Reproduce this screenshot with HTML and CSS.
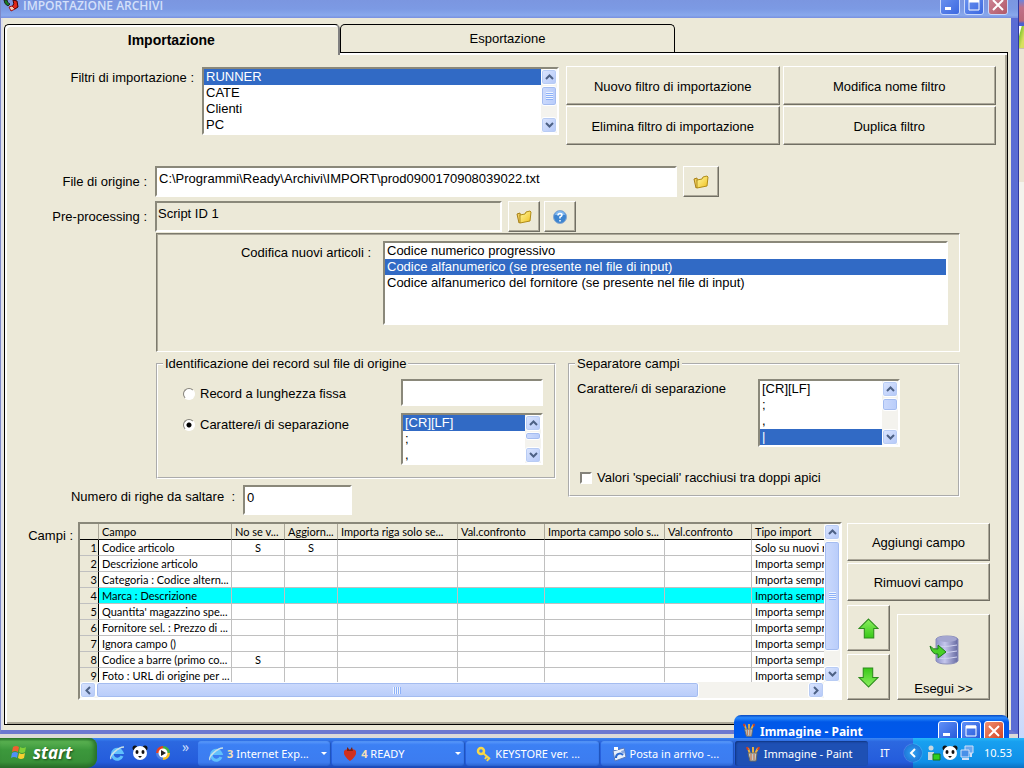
FILE: index.html
```
<!DOCTYPE html>
<html lang="it">
<head>
<meta charset="utf-8">
<meta name="viewport" content="width=device-width, initial-scale=1">
<title>Importazione archivi</title>
<link rel="stylesheet" href="styles.css">
</head>
<body>

<!-- simboli usati piu' volte -->
<svg class="defs" width="0" height="0" aria-hidden="true">
	<linearGradient id="g_yellow" x1="0" y1="0" x2="1" y2="1">
		<stop offset="0" stop-color="#fff9a0"/><stop offset="1" stop-color="#f0c020"/>
	</linearGradient>
	<linearGradient id="g_green" x1="0" y1="0" x2="0" y2="1">
		<stop offset="0" stop-color="#8cf060"/><stop offset="1" stop-color="#38c818"/>
	</linearGradient>
	<linearGradient id="g_db" x1="0" y1="0" x2="1" y2="0">
		<stop offset="0" stop-color="#8c90c8"/><stop offset=".4" stop-color="#c4c6ec"/><stop offset="1" stop-color="#6468a0"/>
	</linearGradient>
	<symbol id="folder" viewBox="0 0 16 16">
		<path d="M1 5l3-1 1 9-2 1z" fill="#f0d060" stroke="#a88018"/>
		<path d="M4 6l5-1 1-2 4-1 1 1-1 9-10 2z" fill="url(#g_yellow)" stroke="#b08c18"/>
	</symbol>
	<symbol id="up" viewBox="0 0 9 6"><path d="M1 5l3.500-3.500L8 5" fill="none" stroke="#4d6185" stroke-width="2"/></symbol>
	<symbol id="down" viewBox="0 0 9 6"><path d="M1 1l3.500 3.500L8 1" fill="none" stroke="#4d6185" stroke-width="2"/></symbol>
	<symbol id="arrow" viewBox="0 0 20 20"><path d="M10 1l9 9h-4v9H6v-9H1z" fill="url(#g_green)" stroke="#2c8c1c"/></symbol>
	<symbol id="panda" viewBox="0 0 16 16">
		<circle cx="3" cy="3" r="2.500" fill="#111"/><circle cx="13" cy="3" r="2.500" fill="#111"/>
		<circle cx="8" cy="8" r="7" fill="#fff"/>
		<ellipse cx="5" cy="7" rx="1.500" ry="2" fill="#111"/><ellipse cx="11" cy="7" rx="1.500" ry="2" fill="#111"/>
		<path d="M6 11h4l-2 2z" fill="#111"/>
	</symbol>
	<symbol id="ie" viewBox="0 0 16 16">
		<path d="M13 11A5 5 0 1 1 13 7.500H5" fill="none" stroke="#60c0fc" stroke-width="3"/>
		<path d="M2 14C0 11 9 2 15 2" fill="none" stroke="#c8e0e8" stroke-width="1.400"/>
	</symbol>
	<symbol id="paint" viewBox="0 0 16 16">
		<path d="M5 8L3 2M8 8V1M10 8l3-6" stroke="#e8b040" stroke-width="2"/>
		<path d="M3 4L2 1M13 4l1-3" stroke="#d04020" stroke-width="2"/>
		<path d="M3 7h9l-1 8H5z" fill="#c0c8c8" stroke="#706858"/><path d="M6 8v6M9 8v6" stroke="#c06030"/>
	</symbol>
</svg>

<div class="desktop">
	<div class="window">
		<div class="titlebar">
			<svg class="app_icon" width="16" height="12" viewBox="0 0 16 12"><path d="M1 0q0 4 4 6l2-2Q4 3 4 0z" fill="#188020" stroke="#222"/><path d="M10 0l4 1 1 6-3 2-3-2q3-3 1-7z" fill="#e02818" stroke="#400"/><path d="M6 7l3-1 3 3-4 2z" fill="#f8c8b0" stroke="#a01010"/></svg>
			<span class="caption">IMPORTAZIONE ARCHIVI</span>
			<button class="win_btn" aria-label="Riduci"><svg width="12" height="12"><path d="M1 8h6v3H1z" fill="#fff"/></svg></button>
			<button class="win_btn" aria-label="Ingrandisci"><svg width="12" height="12"><path d="M1 1h10v10H1z" fill="none" stroke="#fff"/><path d="M1 2h10" stroke="#fff" stroke-width="3"/></svg></button>
			<button class="win_btn close" aria-label="Chiudi"><svg width="12" height="12"><path d="M1 1l10 10M11 1L1 11" stroke="#fff" stroke-width="2"/></svg></button>
		</div>

		<div class="tabs">
			<button class="tab active">Importazione</button>
			<button class="tab">Esportazione</button>
		</div>

		<div class="panel">

			<div class="filters">
				<label for="filtri">Filtri di importazione :</label>
				<div class="listbox">
					<select id="filtri" size="4">
						<option selected>RUNNER</option>
						<option>CATE</option>
						<option>Clienti</option>
						<option>PC</option>
					</select>
					<div class="vscroll">
						<button aria-label="Su"><svg width="9" height="6"><use href="#up"/></svg></button>
						<div class="thumb thumb_m grip"></div>
						<button aria-label="Giu"><svg width="9" height="6"><use href="#down"/></svg></button>
					</div>
				</div>
				<div class="filter_btns">
					<button class="btn">Nuovo filtro di importazione</button>
					<button class="btn">Modifica nome filtro</button>
					<button class="btn">Elimina filtro di importazione</button>
					<button class="btn">Duplica filtro</button>
				</div>
			</div>

			<div class="row row_file">
				<label for="origine">File di origine :</label>
				<input type="text" id="origine" class="field field_file" value="C:\Programmi\Ready\Archivi\IMPORT\prod0900170908039022.txt">
				<button class="btn wide" aria-label="Sfoglia"><svg width="16" height="16"><use href="#folder"/></svg></button>
			</div>

			<div class="row row_script">
				<label for="script">Pre-processing :</label>
				<input type="text" id="script" class="field field_script" value="Script ID 1" readonly>
				<button class="btn small" aria-label="Apri script"><svg width="16" height="16"><use href="#folder"/></svg></button>
				<button class="btn small" aria-label="Aiuto"><svg width="16" height="16" viewBox="0 0 16 16"><circle cx="8" cy="8" r="6.500" fill="#3c84d0" stroke="#88a8d0"/><path d="M3 6a5 4 0 0 1 10 0z" fill="#80b8f0"/><path d="M6 6.500q0-2 2-2t2 1.500q0 1-2 2v1.500M8 11v1.500" fill="none" stroke="#fff" stroke-width="1.500"/></svg></button>
			</div>

			<div class="sunken">
				<label for="codifica">Codifica nuovi articoli :</label>
				<div class="listbox tall">
					<select id="codifica" size="5">
						<option>Codice numerico progressivo</option>
						<option selected>Codice alfanumerico (se presente nel file di input)</option>
						<option>Codice alfanumerico del fornitore (se presente nel file di input)</option>
					</select>
				</div>
			</div>

			<div class="groups">
				<div class="group_left">
					<fieldset class="record">
						<legend>Identificazione dei record sul file di origine</legend>
						<label><input type="radio" name="tipo"> Record a lunghezza fissa</label>
						<input type="text" class="field" aria-label="Lunghezza record">
						<label><input type="radio" name="tipo" checked> Carattere/i di separazione</label>
						<div class="listbox short">
							<select size="3" aria-label="Separatore record">
								<option selected>[CR][LF]</option>
								<option>;</option>
								<option>,</option>
							</select>
							<div class="vscroll">
								<button aria-label="Su"><svg width="9" height="6"><use href="#up"/></svg></button>
								<div class="thumb thumb_xs"></div>
								<button aria-label="Giu"><svg width="9" height="6"><use href="#down"/></svg></button>
							</div>
						</div>
					</fieldset>
					<div class="skip">
						<label for="righe">Numero di righe da saltare &nbsp;:</label>
						<input type="text" id="righe" class="field" value="0">
					</div>
				</div>
				<fieldset class="separator">
					<legend>Separatore campi</legend>
					<label for="sep">Carattere/i di separazione</label>
					<div class="listbox">
						<select id="sep" size="4">
							<option>[CR][LF]</option>
							<option>;</option>
							<option>,</option>
							<option selected>|</option>
						</select>
						<div class="vscroll">
							<button aria-label="Su"><svg width="9" height="6"><use href="#up"/></svg></button>
							<div class="thumb thumb_s"></div>
							<button aria-label="Giu"><svg width="9" height="6"><use href="#down"/></svg></button>
						</div>
					</div>
					<label class="quotes"><input type="checkbox"> Valori 'speciali' racchiusi tra doppi apici</label>
				</fieldset>
			</div>

			<div class="fields">
				<div class="fields_label">Campi :</div>
				<div class="grid">
					<div class="grid_view">
						<table>
							<colgroup>
								<col class="c_num"><col class="c_campo"><col class="c_flag"><col class="c_flag"><col class="c_solo"><col class="c_val"><col class="c_solo"><col class="c_val"><col>
							</colgroup>
							<thead>
								<tr><th></th><th>Campo</th><th>No se v...</th><th>Aggiorn...</th><th>Importa riga solo se...</th><th>Val.confronto</th><th>Importa campo solo s...</th><th>Val.confronto</th><th>Tipo import</th></tr>
							</thead>
							<tbody>
								<tr><th>1</th><td>Codice articolo</td><td>S</td><td>S</td><td></td><td></td><td></td><td></td><td>Solo su nuovi r</td></tr>
								<tr><th>2</th><td>Descrizione articolo</td><td></td><td></td><td></td><td></td><td></td><td></td><td>Importa sempre</td></tr>
								<tr><th>3</th><td>Categoria : Codice altern...</td><td></td><td></td><td></td><td></td><td></td><td></td><td>Importa sempre</td></tr>
								<tr class="current"><th>4</th><td>Marca : Descrizione</td><td></td><td></td><td></td><td></td><td></td><td></td><td>Importa sempre</td></tr>
								<tr><th>5</th><td>Quantita' magazzino spe...</td><td></td><td></td><td></td><td></td><td></td><td></td><td>Importa sempre</td></tr>
								<tr><th>6</th><td>Fornitore sel. : Prezzo di ...</td><td></td><td></td><td></td><td></td><td></td><td></td><td>Importa sempre</td></tr>
								<tr><th>7</th><td>Ignora campo ()</td><td></td><td></td><td></td><td></td><td></td><td></td><td>Importa sempre</td></tr>
								<tr><th>8</th><td>Codice a barre (primo co...</td><td>S</td><td></td><td></td><td></td><td></td><td></td><td>Importa sempre</td></tr>
								<tr><th>9</th><td>Foto : URL di origine per ...</td><td></td><td></td><td></td><td></td><td></td><td></td><td>Importa sempre</td></tr>
							</tbody>
						</table>
					</div>
					<div class="vscroll">
						<button aria-label="Su"><svg width="9" height="6"><use href="#up"/></svg></button>
						<div class="thumb thumb_l grip"></div>
						<button aria-label="Giu"><svg width="9" height="6"><use href="#down"/></svg></button>
					</div>
					<div class="hscroll">
						<button aria-label="Sinistra"><svg width="6" height="9" viewBox="0 0 6 9"><path d="M5 1L1.500 4.500 5 8" fill="none" stroke="#4d6185" stroke-width="2"/></svg></button>
						<div class="hthumb"></div>
						<button aria-label="Destra"><svg width="6" height="9" viewBox="0 0 6 9"><path d="M1 1l3.500 3.500L1 8" fill="none" stroke="#4d6185" stroke-width="2"/></svg></button>
					</div>
				</div>
				<div class="actions">
					<button class="btn">Aggiungi campo</button>
					<button class="btn">Rimuovi campo</button>
					<div class="actions_bottom">
						<div class="move">
							<button class="btn" aria-label="Sposta su"><svg width="21" height="21"><use href="#arrow"/></svg></button>
							<button class="btn" aria-label="Sposta giu"><svg class="flip" width="21" height="21"><use href="#arrow"/></svg></button>
						</div>
						<button class="btn run">
							<svg width="30" height="30" viewBox="0 0 30 30"><path d="M7 4v22q2 3 11 3t11-3V4q-2-3-11-3T7 4z" fill="url(#g_db)" stroke="#8c90bc"/><ellipse cx="18" cy="4" rx="10" ry="3" fill="#a4a6d0"/><path d="M8 10q3 3 20 0M8 16q3 3 20 0M8 22q3 3 20 0" fill="none" stroke="#d0d2f0"/><path d="M1 11q3 4 8 3v-4l8 7-8 6v-4q-6 1-8-8z" fill="#48d028" stroke="#1c7c18"/></svg>
							<span>Esegui &gt;&gt;</span>
						</button>
					</div>
				</div>
			</div>

		</div>
	</div>

	<div class="behind">
		<div class="behind_title"></div>
		<div class="behind_logo"></div>
		<div class="behind_bar"></div>
		<div class="behind_page"></div>
	</div>

	<!-- finestra di Paint sopra la finestra principale -->
	<div class="paint_win">
		<svg width="14" height="16"><use href="#paint"/></svg>
		<span>Immagine - Paint</span>
		<button class="win_btn" aria-label="Riduci Paint"><svg width="12" height="12"><path d="M1 8h7v3H1z" fill="#fff"/></svg></button>
		<button class="win_btn" aria-label="Ingrandisci Paint"><svg width="12" height="12"><path d="M1 1h10v10H1z" fill="none" stroke="#fff"/><path d="M1 2h10" stroke="#fff" stroke-width="3"/></svg></button>
		<button class="win_btn close" aria-label="Chiudi Paint"><svg width="12" height="12"><path d="M1 1l10 10M11 1L1 11" stroke="#fff" stroke-width="2"/></svg></button>
	</div>
</div>

<div class="taskbar">
	<button class="start">
		<svg width="18" height="18" viewBox="0 0 18 18"><path d="M3 3q3-2 6 0L8 8Q5 6 2 8z" fill="#f06030"/><path d="M10 3q3 2 6 0l-1 5q-3 2-6 0z" fill="#80d038"/><path d="M2 9q3-2 6 0l-1 5q-3-2-6 0z" fill="#5090f8"/><path d="M9 9q3 2 6 0l-1 5q-3 2-6 0z" fill="#f8d030"/></svg>
		start
	</button>
	<div class="quick">
		<svg width="16" height="16"><use href="#ie"/></svg>
		<svg width="16" height="16"><use href="#panda"/></svg>
		<svg width="16" height="16" viewBox="0 0 16 16"><path d="M8 8V1a7 7 0 0 1 7 7z" fill="#40b040"/><path d="M8 8h7a7 7 0 0 1-7 7z" fill="#f8c020"/><path d="M8 8v7a7 7 0 0 1-7-7z" fill="#5080e0"/><path d="M8 8H1a7 7 0 0 1 7-7z" fill="#e84020"/><circle cx="8" cy="8" r="4.500" fill="#fff"/><path d="M6 5l5 3-5 3z" fill="#222"/></svg>
		<span class="more">»</span>
	</div>
	<div class="tasks">
		<button class="task"><svg width="16" height="16"><use href="#ie"/></svg><span><b>3</b> Internet Exp...</span><i></i></button>
		<button class="task"><svg width="16" height="16" viewBox="0 0 16 16"><path d="M8 15Q1 10 2 5q2-3 6-1 4-2 6 1 1 5-6 10z" fill="#d03020"/><path d="M5 1l3 3 2-3 1 4H5z" fill="#802010"/></svg><span><b>4</b> READY</span><i></i></button>
		<button class="task"><svg width="16" height="16" viewBox="0 0 16 16"><circle cx="5" cy="5" r="3" fill="none" stroke="#f8d848" stroke-width="2.500"/><path d="M7 7l7 6M11 10l-2 3M13 12l-2 3" stroke="#f8d848" stroke-width="2"/></svg><span>KEYSTORE ver. ...</span></button>
		<button class="task"><svg width="16" height="16" viewBox="0 0 16 16"><path d="M2 5l11-3 2 9-11 4z" fill="#e8f0fc" stroke="#5878b8"/><path d="M5 12a4 4 0 0 1 7-3" fill="none" stroke="#2868d0" stroke-width="2"/><path d="M10 5l3-1 1 3-3 1z" fill="#88a8e0"/><path d="M3 1h4v3H3z" fill="#fff"/></svg><span>Posta in arrivo -...</span></button>
		<button class="task pressed"><svg width="16" height="16"><use href="#paint"/></svg><span>Immagine - Paint</span></button>
	</div>
	<div class="lang">IT</div>
	<div class="tray">
		<button class="chevron" aria-label="Mostra icone nascoste"><svg width="8" height="10" viewBox="0 0 8 10"><path d="M6 1L2 5l4 4" fill="none" stroke="#fff" stroke-width="2"/></svg></button>
		<svg width="16" height="16" viewBox="0 0 16 16"><circle cx="6" cy="3" r="2.500" fill="#c8d8e0"/><path d="M3 7h6v8H3z" fill="#c8d8e0"/><path d="M8 9h7v6H8z" fill="#30d020" stroke="#187818"/></svg>
		<svg width="16" height="16"><use href="#panda"/></svg>
		<svg width="16" height="16" viewBox="0 0 16 16"><path d="M6 1h8v7H6z" fill="#68a8f0" stroke="#d0e0f8"/><path d="M2 5h8v7H2z" fill="#4890e8" stroke="#d0e0f8"/><path d="M3 14h7M12 8v4" stroke="#d0e0f8" stroke-width="2"/></svg>
		<span class="clock">10.53</span>
	</div>
</div>

</body>
</html>
```
FILE: styles.css
```
*{
	box-sizing: border-box;
}

body{
	margin: 0;
	height: 100vh;
	min-height: 768px;
	display: flex;
	flex-direction: column;
	overflow: hidden;
	font-family: "Liberation Sans", Arial, sans-serif;
	font-size: 13px;
	line-height: 16px;
	color: #000;
	background-color: #dcdad8;
}

button, input, select{
	font: inherit;
	color: inherit;
	margin: 0;
}

button{
	padding: 0;
	border: 0;
	white-space: nowrap;
}

svg{
	display: block;
	flex: none;
}

.defs{
	position: absolute;
}

.desktop{
	flex: 1;
	display: flex;
	position: relative;
	padding-bottom: 4px;
}

/* finestra principale */
.window{
	flex: 1;
	min-width: 0;
	display: flex;
	flex-direction: column;
	background-color: #ece9d8;
	border-left: 1px solid #7c88c8;
	border-right: 7px solid #5a6cd4;
	border-bottom: 4px solid #6c78d0;
	box-shadow: inset 2px 0 0 #dfe0ea;
}

.titlebar{
	height: 18px;
	flex: none;
	display: flex;
	align-items: flex-start;
	gap: 2px;
	overflow: hidden;
	margin-right: -7px;
	padding: 0 9px 0 2px;
	background: linear-gradient(#7b96e0, #7c9ae4 50%, #88a8ec 85%, #7890e0);
}

.caption{
	flex: 1;
	padding-left: 2px;
	font-family: "Open Sans", sans-serif;
	font-size: 12px;
	line-height: 12px;
	font-weight: 600;
	color: #d4e0fa;
}

.win_btn{
	width: 20px;
	height: 20px;
	margin: -5px 1px 0;
	display: flex;
	align-items: center;
	justify-content: center;
	border: 1px solid #c8d8fc;
	border-radius: 3px;
	background: linear-gradient(135deg, #6c94f0, #3c68e0);
}

.win_btn.close{
	background: linear-gradient(135deg, #d08898, #b05868);
}

/* linguette */
.tabs{
	display: grid;
	grid-template-columns: 1fr 1fr 1fr;
	height: 34px;
	flex: none;
	padding: 6px 0 0 3px;
}

.tab{
	position: relative;
	height: 28px;
	background-color: #ece9d8;
	border: 1px solid #000;
	border-bottom: 0;
	border-radius: 5px 5px 0 0;
}

.tab.active{
	height: 31px;
	z-index: 1;
	font-size: 14px;
	font-weight: bold;
	border-right: 2px solid #808080;
	box-shadow: inset 2px 2px 0 #fff;
}

.panel{
	flex: 1;
	margin: 0 3px 5px;
	padding: 13px 11px 0 0;
	border: 1px solid #000;
	box-shadow: inset 2px 2px 0 #fff, inset -2px -2px 0 #aca899;
}

/* bottoni in rilievo */
.btn{
	display: flex;
	align-items: center;
	justify-content: center;
	padding-top: 2px;
	background-color: #ece9d8;
	border: 1px solid;
	border-color: #fff #716f64 #716f64 #fff;
	box-shadow: inset -1px -1px 0 #aca899;
}

.field{
	background-color: #fff;
	border: 2px solid;
	border-color: #8a887a #fff #fff #8a887a;
	border-radius: 0;
	padding: 0 2px 5px;
	min-width: 0;
	outline: 0;
}

.field[readonly]{
	background-color: #ece9d8;
	padding-left: 1px;
}

.listbox{
	display: flex;
	height: 68px;
	background-color: #fff;
	border: 2px solid;
	border-color: #8a887a #fff #fff #8a887a;
}

.listbox.tall{
	flex: 1;
	height: 84px;
}

.listbox.short{
	height: 52px;
}

.listbox select{
	flex: 1;
	min-width: 0;
	height: 100%;
	padding: 0;
	border: 0;
	outline: 0;
	border-radius: 0;
	background-color: #fff;
	overflow: hidden;
	scrollbar-width: none;
}

.listbox option{
	height: 16px;
	min-height: 16px;
	line-height: 16px;
	padding: 0 2px;
}

.listbox option:checked{
	background: #316ac5 linear-gradient(#316ac5, #316ac5);
	color: #fff;
}

/* barre di scorrimento */
.vscroll{
	width: 16px;
	flex: none;
	display: flex;
	flex-direction: column;
	background-color: #f4f3ee;
}

.vscroll button, .hscroll button{
	width: 16px;
	height: 16px;
	flex: none;
	display: flex;
	align-items: center;
	justify-content: center;
	border: 1px solid #fff;
	border-radius: 3px;
	background: linear-gradient(135deg, #dce6fe, #b4c8f8);
	box-shadow: inset 0 0 0 1px #b8ccf4;
}

.vscroll button:last-child{
	margin-top: auto;
}

.thumb{
	margin-top: 1px;
	display: flex;
	align-items: center;
	justify-content: center;
	border: 1px solid #fff;
	border-radius: 3px;
	background: linear-gradient(90deg, #ccdafc, #b8ccfa);
	box-shadow: inset 0 0 0 1px #a4bcf0;
}

.thumb_xs{ height: 8px; }
.thumb_s{ height: 13px; }
.thumb_m{ height: 20px; }
.thumb_l{ height: 110px; }

.grip::after{
	content: "";
	width: 7px;
	height: 8px;
	background: repeating-linear-gradient(#eef4fe 0 1px, #8cb0f8 1px 2px);
}

/* filtri */
.filters{
	display: grid;
	grid-template-columns: 189px 1fr 430px;
	align-items: start;
}

.filters label{
	text-align: right;
	line-height: 24px;
}

.filters .listbox{
	margin: 1px 7px 0 8px;
}

.filter_btns{
	display: grid;
	grid-template-columns: 1fr 1fr;
	gap: 1px 3px;
}

.filter_btns .btn{
	height: 39px;
}

/* file di origine e script */
.row{
	display: flex;
	height: 31px;
	padding-right: 277px;
}

.row label{
	width: 142px;
	flex: none;
	margin-right: 8px;
	text-align: right;
	line-height: 32px;
}

.row .btn{
	flex: none;
	margin-left: 6px;
	padding: 0;
}

.row .small + .small{
	margin-left: 4px;
}

.row_file{
	margin-top: 21px;
}

.row_script{
	margin-top: 4px;
	padding-right: 420px;
}

.field_file, .field_script{
	flex: 1;
}

.btn.wide{
	width: 36px;
}

.btn.small{
	width: 32px;
}

.sunken{
	display: flex;
	align-items: flex-start;
	height: 119px;
	margin: 1px 36px 0 151px;
	padding: 7px 11px 0 1px;
	border: 1px solid;
	border-color: #7c7a6c #fff #fff #7c7a6c;
	box-shadow: inset 1px 1px 0 #aca899;
}

.sunken label{
	width: 213px;
	margin-right: 12px;
	text-align: right;
	line-height: 24px;
}

/* gruppi */
.groups{
	display: flex;
	align-items: flex-start;
	margin: 4px 36px 0 0;
}

.group_left{
	flex: 1;
}

fieldset{
	margin: 0;
	min-width: 0;
	border: 2px groove #fff;
	display: grid;
	align-items: start;
}

legend{
	padding: 0 2px;
}

fieldset label{
	display: flex;
	align-items: center;
	line-height: 20px;
}

.record{
	height: 123px;
	margin-left: 151px;
	padding: 7px 11px 0 25px;
	grid-template-columns: 1fr 142px;
	grid-template-rows: 27px 52px;
	row-gap: 7px;
}

.record legend{
	margin-left: -20px;
}

.record label{
	padding-top: 2px;
}

.record .field{
	height: 27px;
}

.record label:first-of-type{
	padding-top: 5px;
}

.separator{
	width: 392px;
	height: 141px;
	margin-left: 12px;
	padding: 7px 58px 0 7px;
	grid-template-columns: 1fr 142px;
	grid-template-rows: 68px 1fr;
}

.separator legend{
	margin-left: -2px;
}

.quotes{
	grid-column: 1 / 3;
	margin: 21px 0 0 3px;
}

input[type="radio"], input[type="checkbox"]{
	appearance: none;
	width: 12px;
	height: 12px;
	flex: none;
	margin-right: 5px;
	background-color: #fff;
	border: 2px solid;
	border-color: #84827a #fff #fff #84827a;
}

input[type="radio"]{
	border-width: 1px;
	border-radius: 50%;
}

input[type="radio"]:checked{
	background-image: radial-gradient(#000 2px, transparent 3px);
}

.skip{
	display: flex;
	margin-top: 6px;
}

.skip label{
	width: 230px;
	margin-right: 8px;
	text-align: right;
	line-height: 24px;
}

.skip .field{
	width: 109px;
	height: 30px;
}

/* elenco campi */
.fields{
	display: flex;
	align-items: flex-start;
	margin-top: 7px;
}

.fields_label{
	width: 68px;
	flex: none;
	margin-right: 5px;
	text-align: right;
	line-height: 28px;
}

.grid{
	flex: 1;
	min-width: 0;
	display: grid;
	grid-template-columns: 1fr 16px;
	grid-template-rows: 158px 16px;
	background-color: #fff;
	border: 2px solid;
	border-color: #8a887a #fff #fff #8a887a;
}

.grid_view{
	min-width: 0;
	overflow: hidden;
}

table{
	width: 100%;
	table-layout: fixed;
	border-collapse: separate;
	border-spacing: 0;
	font-family: Lato, "Liberation Sans", sans-serif;
	font-size: 11px;
}

.c_num{ width: 19px; }
.c_campo{ width: 133px; }
.c_flag{ width: 53px; }
.c_solo{ width: 120px; }
.c_val{ width: 87px; }

th, td{
	height: 16px;
	padding: 0 0 0 3px;
	line-height: 15px;
	font-weight: normal;
	text-align: left;
	white-space: nowrap;
	overflow: hidden;
	border-right: 1px solid #c0c0c0;
	border-bottom: 1px solid #c0c0c0;
}

th{
	background-color: #ece9d8;
}

thead th{
	border-right-color: #aca899;
	border-bottom-color: #000;
}

tbody th{
	padding: 0 1px;
	text-align: right;
	border-right-color: #000;
}

th:last-child, td:last-child{
	border-right: 0;
}

td:nth-child(3), td:nth-child(4){
	padding-right: 3px;
	text-align: center;
}

.current td{
	background-color: #0ff;
}

.hscroll{
	display: flex;
	background-color: #f4f3ee;
}

.hthumb{
	width: 81%;
	margin-right: auto;
	display: flex;
	align-items: center;
	justify-content: center;
	border: 1px solid #fff;
	border-radius: 3px;
	background: linear-gradient(#ccdafc, #b8ccfa);
	box-shadow: inset 0 0 0 1px #a4bcf0;
}

.hthumb::after{
	content: "";
	width: 8px;
	height: 7px;
	background: repeating-linear-gradient(90deg, #eef4fe 0 1px, #8cb0f8 1px 2px);
}

.actions{
	width: 143px;
	flex: none;
	margin: 1px 6px 0 5px;
	display: flex;
	flex-direction: column;
	gap: 2px;
}

.actions > .btn{
	height: 38px;
}

.actions_bottom{
	display: flex;
	align-items: flex-end;
	justify-content: space-between;
	margin-top: 2px;
}

.move{
	display: flex;
	flex-direction: column;
	gap: 3px;
}

.move .btn{
	width: 43px;
	height: 46px;
	padding: 0;
}

.flip{
	transform: rotate(180deg);
}

.run{
	width: 93px;
	height: 86px;
	flex-direction: column;
	justify-content: flex-end;
	gap: 16px;
	padding-bottom: 2px;
}

/* finestra che si intravede a destra */
.behind{
	width: 6px;
	flex: none;
	display: flex;
	flex-direction: column;
	margin-bottom: -4px;
	border-left: 1px solid #3038a0;
	background-color: #fff;
}

.behind_title{
	height: 26px;
	background: linear-gradient(#6c84dc, #c07088 30%, #b86878 80%, #4c60d0 90%);
}

.behind_logo{
	height: 22px;
	background: linear-gradient(105deg, #fff 20%, #90c838 30%, #d8e060 70%);
}

.behind_bar{
	height: 134px;
	background-color: #ece4d4;
	border-top: 1px solid #c8c0b0;
}

.behind_page{
	flex: 1;
	background: linear-gradient(#f4f2ec 75%, #c8d8fc);
}

.paint_win{
	position: absolute;
	right: 15px;
	bottom: 0;
	width: 275px;
	height: 23px;
	display: flex;
	align-items: flex-start;
	gap: 1px;
	overflow: hidden;
	padding: 7px 4px 0 8px;
	border-radius: 7px 7px 0 0;
	background: linear-gradient(#0848c0, #2888fc 12%, #0058e8 30%, #0058ec);
	color: #fff;
	font-family: "Noto Sans", sans-serif;
	font-size: 12px;
	font-weight: bold;
	line-height: 20px;
}

.paint_win span{
	flex: 1;
	padding-left: 3px;
}

.paint_win .win_btn{
	margin-top: -1px;
	border-color: #fff;
	background: linear-gradient(135deg, #6090f8, #2458d8);
}

.paint_win .close{
	background: linear-gradient(135deg, #f09070, #d04020);
}

/* barra delle applicazioni */
.taskbar{
	height: 30px;
	flex: none;
	display: flex;
	background: linear-gradient(#3c88f4, #2c68e0 12%, #245cdc 80%, #1c48b4);
	color: #fff;
	font-family: "Noto Sans", sans-serif;
	font-size: 11px;
}

.start{
	width: 97px;
	display: flex;
	align-items: center;
	gap: 5px;
	padding-left: 10px;
	border-radius: 0 8px 10px 0;
	background: linear-gradient(#2c7c2c, #58b050 12%, #3c983c 40%, #389038 80%, #286c28);
	box-shadow: inset -3px 0 4px #287028;
	font-family: "Open Sans", sans-serif;
	font-size: 17px;
	font-weight: bold;
	font-style: italic;
	line-height: 22px;
	text-shadow: 1px 1px 2px #1c4c1c;
}

.quick{
	width: 101px;
	display: flex;
	align-items: center;
	gap: 7px;
	padding: 0 8px 0 12px;
}

.more{
	margin: -12px 0 0 4px;
	font-size: 14px;
	color: #c8dcfc;
}

.tasks{
	flex: 1;
	min-width: 0;
	display: grid;
	grid-template-columns: repeat(5, 1fr);
	gap: 1px;
	padding: 3px 0 2px;
}

.task{
	min-width: 0;
	display: flex;
	align-items: center;
	gap: 3px;
	padding: 0 4px 0 10px;
	border-radius: 3px;
	background: linear-gradient(#5c9cfc, #3c80f4 15%, #3c7cf0 85%, #2c64d0);
	box-shadow: inset -1px 0 1px #1c50b8;
	text-align: left;
}

.task span{
	flex: 1;
}

.task b{
	color: #f4e0b8;
	font-weight: bold;
}

.task i{
	border: 3px solid transparent;
	border-top-color: #fff;
	border-bottom: 0;
}

.task.pressed{
	background: #1e50b4;
	box-shadow: inset 1px 1px 2px #103480;
}

.lang{
	width: 45px;
	padding-left: 12px;
	line-height: 30px;
}

.tray{
	display: flex;
	align-items: center;
	gap: 1px;
	padding-right: 12px;
	background: linear-gradient(#28b8f8, #18a0f0 12%, #1090e8 80%, #0c70c0);
}

.chevron{
	width: 18px;
	height: 18px;
	margin: 0 2px 0 -9px;
	display: flex;
	align-items: center;
	justify-content: center;
	border-radius: 50%;
	background: radial-gradient(#30a0f0, #1868d0);
	box-shadow: 0 0 1px #d0e8fc;
}

.clock{
	padding-left: 8px;
}
```
